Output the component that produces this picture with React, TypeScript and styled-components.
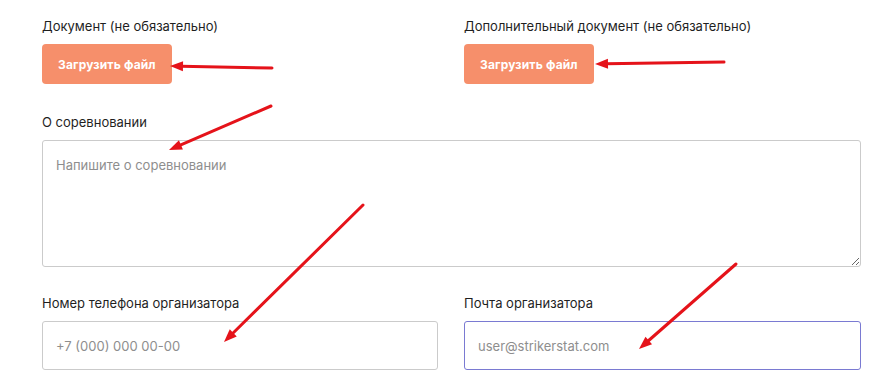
import React from "react";
import styled, { createGlobalStyle } from "styled-components";

const Global = createGlobalStyle`
  html, body { margin: 0; padding: 0; background: #ffffff; }
  body { font-family: Inter, "Noto Sans", Roboto, sans-serif; color: #1f1f1f; }
  * { box-sizing: border-box; }
`;

const Page = styled.div`
  position: relative;
  width: 883px;
  height: 387px;
  overflow: hidden;
  padding: 18px 22px 0 42px;
`;

const Grid = styled.div`
  display: grid;
  grid-template-columns: 396px 397px;
  column-gap: 26px;
`;

const Field = styled.div<{ $span?: boolean; $mb?: number }>`
  display: flex;
  flex-direction: column;
  align-items: flex-start;
  grid-column: ${(p) => (p.$span ? "1 / -1" : "auto")};
  margin-bottom: ${(p) => p.$mb ?? 0}px;
`;

const Label = styled.label`
  font-size: 13px;
  line-height: 16px;
  color: #1f1f1f;
  margin-bottom: 10px;
`;

const UploadButton = styled.button`
  height: 40px;
  padding: 0 16px;
  border: none;
  border-radius: 4px;
  background: #f68f6b;
  color: #ffffff;
  font-family: inherit;
  font-size: 12px;
  font-weight: 700;
  letter-spacing: 0.15px;
  cursor: pointer;
`;

const TextArea = styled.textarea`
  width: 100%;
  height: 127px;
  border: 1px solid #cbcbcb;
  border-radius: 3px;
  padding: 15px 13px;
  font-family: inherit;
  font-size: 13px;
  line-height: 18px;
  resize: vertical;
  outline: none;
  &::placeholder { color: #8e8e8e; }
`;

const Input = styled.input<{ $focused?: boolean }>`
  width: 100%;
  height: 49px;
  border: 1px solid ${(p) => (p.$focused ? "#7a7ad2" : "#cbcbcb")};
  border-radius: 3px;
  padding: 0 13px;
  font-family: inherit;
  font-size: 13px;
  outline: none;
  &::placeholder { color: #8e8e8e; }
`;

const Overlay = styled.svg`
  position: absolute;
  left: 0;
  top: 0;
  pointer-events: none;
`;

type Arrow = { x1: number; y1: number; x2: number; y2: number };

const arrows: Arrow[] = [
  { x1: 272, y1: 68, x2: 170, y2: 66 },
  { x1: 724, y1: 62, x2: 595, y2: 64 },
  { x1: 271, y1: 106, x2: 169, y2: 150 },
  { x1: 363, y1: 205, x2: 224, y2: 342 },
  { x1: 736, y1: 264, x2: 639, y2: 349 },
];

function ArrowShape({ x1, y1, x2, y2 }: Arrow) {
  const dx = x2 - x1;
  const dy = y2 - y1;
  const len = Math.hypot(dx, dy);
  const ux = dx / len;
  const uy = dy / len;
  const headLen = 13;
  const headW = 5;
  const bx = x2 - ux * headLen;
  const by = y2 - uy * headLen;
  const px = -uy;
  const py = ux;
  const pts = `${x2},${y2} ${bx + px * headW},${by + py * headW} ${bx - px * headW},${by - py * headW}`;
  return (
    <g>
      <line x1={x1} y1={y1} x2={bx + ux * 2} y2={by + uy * 2} stroke="#e5131a" strokeWidth={3} strokeLinecap="round" />
      <polygon points={pts} fill="#e5131a" />
    </g>
  );
}

export default function App() {
  return (
    <>
      <Global />
      <Page>
        <Grid>
          <Field $mb={30}>
            <Label>Документ (не обязательно)</Label>
            <UploadButton>Загрузить файл</UploadButton>
          </Field>
          <Field $mb={30}>
            <Label>Дополнительный документ (не обязательно)</Label>
            <UploadButton>Загрузить файл</UploadButton>
          </Field>
          <Field $span $mb={28}>
            <Label>О соревновании</Label>
            <TextArea placeholder="Напишите о соревновании" />
          </Field>
          <Field>
            <Label>Номер телефона организатора</Label>
            <Input placeholder="+7 (000) 000 00-00" />
          </Field>
          <Field>
            <Label>Почта организатора</Label>
            <Input $focused placeholder="user@strikerstat.com" />
          </Field>
        </Grid>
        <Overlay width={883} height={387} viewBox="0 0 883 387">
          {arrows.map((a, i) => (
            <ArrowShape key={i} {...a} />
          ))}
        </Overlay>
      </Page>
    </>
  );
}
